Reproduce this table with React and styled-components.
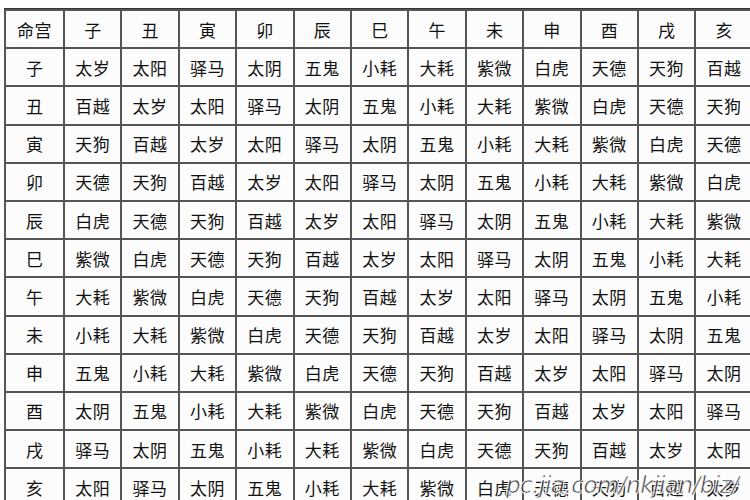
import React from "react"
import styled, { createGlobalStyle } from "styled-components"

const GlobalStyle = createGlobalStyle`
  html, body {
    margin: 0;
    padding: 0;
    background: #fff;
  }
  body {
    width: 750px;
    height: 500px;
    overflow: hidden;
  }
`

const Page = styled.div`
  position: relative;
  width: 750px;
  height: 500px;
  overflow: hidden;
  background: #fdfdfd;
  padding: 8px 0 0 4px;
  box-sizing: border-box;
`

const Grid = styled.div`
  display: grid;
  grid-template-columns: 57px repeat(12, 55.4px);
  grid-auto-rows: 36.2px;
  gap: 2px;
  padding: 2px;
  border-top: 1px solid #333;
  background: #555;
  width: max-content;
`

const Cell = styled.div`
  display: flex;
  align-items: center;
  justify-content: center;
  background: #fcfcfc;
  font-family: "Noto Sans CJK SC", "Noto Sans CJK TC", sans-serif;
  font-size: 17px;
  color: #111;
  letter-spacing: ${props => (props.$single ? "0" : "0.5px")};
  white-space: nowrap;
`

const Watermark = styled.div`
  position: absolute;
  left: 506px;
  top: 472px;
  font-family: "DejaVu Sans", sans-serif;
  font-style: italic;
  font-size: 23px;
  letter-spacing: -0.5px;
  color: #222;
  opacity: 0.85;
  -webkit-text-stroke: 0.6px #fff;
  text-shadow: 1px 0 0 #fff, -1px 0 0 #fff, 0 1px 0 #fff;
  white-space: nowrap;
`

const branches = ["子", "丑", "寅", "卯", "辰", "巳", "午", "未", "申", "酉", "戌", "亥"]
const stars = ["太岁", "太阳", "驿马", "太阴", "五鬼", "小耗", "大耗", "紫微", "白虎", "天德", "天狗", "百越"]

export default function App() {
  return (
    <Page>
      <GlobalStyle />
      <Grid>
        <Cell>命宫</Cell>
        {branches.map(b => (
          <Cell key={"h" + b} $single>
            {b}
          </Cell>
        ))}
        {branches.map((b, row) => (
          <React.Fragment key={"r" + b}>
            <Cell $single>{b}</Cell>
            {branches.map((_, col) => (
              <Cell key={b + col}>{stars[(col - row + 12) % 12]}</Cell>
            ))}
          </React.Fragment>
        ))}
      </Grid>
      <Watermark>pc.jia.com/nkjian/biz/</Watermark>
    </Page>
  )
}
